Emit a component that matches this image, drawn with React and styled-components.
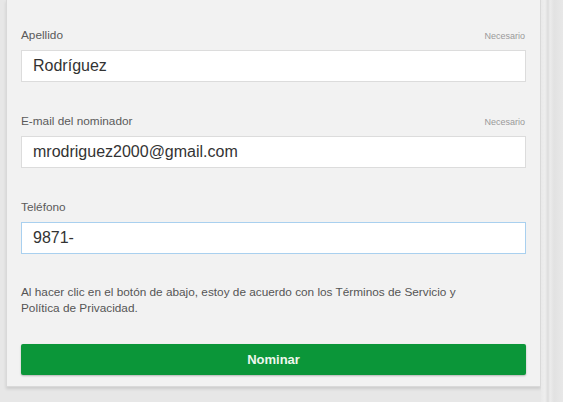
import React from "react";
import styled, { createGlobalStyle } from "styled-components";

const GlobalStyle = createGlobalStyle`
  html, body {
    margin: 0;
    padding: 0;
    background: #e7e7e7;
    font-family: "Liberation Sans", Arial, sans-serif;
  }
`;

const Page = styled.div`
  display: flex;
  width: 563px;
  height: 402px;
  overflow: hidden;
  padding-left: 6px;
  box-sizing: border-box;
`;

const Card = styled.form`
  width: 535px;
  height: 387px;
  box-sizing: border-box;
  background: #f2f2f2;
  border: 1px solid #d9d9d9;
  border-top: none;
  box-shadow: 0 2px 3px rgba(0, 0, 0, 0.12);
  padding: 28px 14px 11px 14px;
  display: flex;
  flex-direction: column;
`;

const Gutter = styled.div`
  flex: 1;
  background: linear-gradient(
    to right,
    #e9e9e9 0px,
    #eeeeee 4px,
    #dcdcdc 7px,
    #ececec 9px,
    #e2e2e2 13px,
    #e8e8e8 22px
  );
`;

const Field = styled.div`
  display: flex;
  flex-direction: column;
  margin-bottom: ${(p) => p.$gap || 32}px;
`;

const LabelRow = styled.div`
  display: flex;
  justify-content: space-between;
  align-items: baseline;
  height: 14px;
  margin-bottom: 8px;
`;

const Label = styled.label`
  font-size: 11.8px;
  color: #5a5a5a;
  line-height: 14px;
`;

const Required = styled.span`
  font-size: 9px;
  color: #9a9a9a;
  margin-right: 1px;
`;

const Input = styled.input`
  height: 32px;
  box-sizing: border-box;
  border: 1px solid ${(p) => (p.$focused ? "#a9d0ef" : "#dcdcdc")};
  background: #fff;
  padding: 0 11px;
  font-family: "Liberation Sans", Arial, sans-serif;
  font-size: 16px;
  color: #333;
  outline: none;
  margin: 0;
`;

const Terms = styled.p`
  margin: 0 0 28px 0;
  font-size: 11.8px;
  line-height: 16px;
  color: #555;
  max-width: 470px;
`;

const Submit = styled.button`
  height: 31px;
  border: none;
  border-radius: 2px;
  background: #0b9639;
  color: #eef7ee;
  font-family: "Liberation Sans", Arial, sans-serif;
  font-weight: bold;
  font-size: 13px;
  box-shadow: 0 1px 2px rgba(0, 0, 0, 0.25);
  cursor: pointer;
`;

const FIELDS = [
  { label: "Apellido", value: "Rodríguez", required: true },
  { label: "E-mail del nominador", value: "mrodriguez2000@gmail.com", required: true },
  { label: "Teléfono", value: "9871-", focused: true, gap: 30 },
];

export default function App() {
  return (
    <>
      <GlobalStyle />
      <Page>
        <Card onSubmit={(e) => e.preventDefault()}>
          {FIELDS.map((f) => (
            <Field key={f.label} $gap={f.gap}>
              <LabelRow>
                <Label>{f.label}</Label>
                {f.required && <Required>Necesario</Required>}
              </LabelRow>
              <Input defaultValue={f.value} $focused={f.focused} />
            </Field>
          ))}
          <Terms>
            Al hacer clic en el botón de abajo, estoy de acuerdo con los Términos de Servicio y
            Política de Privacidad.
          </Terms>
          <Submit type="submit">Nominar</Submit>
        </Card>
        <Gutter />
      </Page>
    </>
  );
}
